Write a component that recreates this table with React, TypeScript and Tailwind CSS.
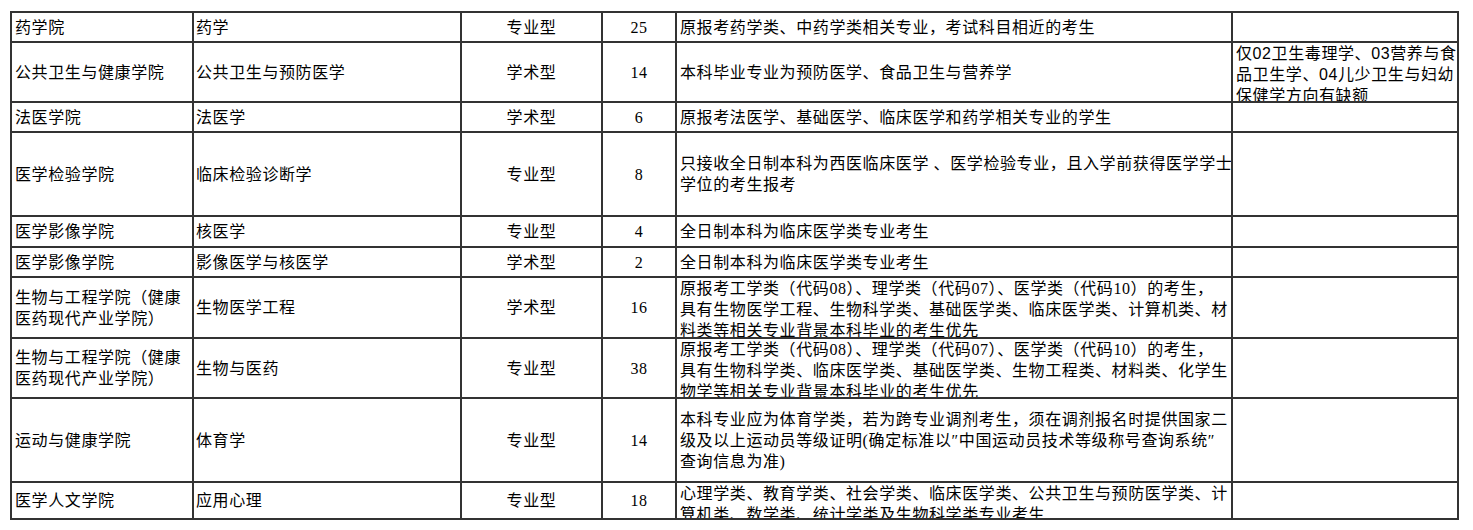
import React from "react";

type Row = {
  college: string[];
  major: string;
  kind: string;
  count: string;
  note: string[];
  noteTop?: boolean;
  remark?: string[];
};

const rows: Row[] = [
  { college: ["药学院"], major: "药学", kind: "专业型", count: "25", note: ["原报考药学类、中药学类相关专业，考试科目相近的考生"] },
  {
    college: ["公共卫生与健康学院"],
    major: "公共卫生与预防医学",
    kind: "学术型",
    count: "14",
    note: ["本科毕业专业为预防医学、食品卫生与营养学"],
    remark: ["仅02卫生毒理学、03营养与食", "品卫生学、04儿少卫生与妇幼", "保健学方向有缺额"],
  },
  { college: ["法医学院"], major: "法医学", kind: "学术型", count: "6", note: ["原报考法医学、基础医学、临床医学和药学相关专业的学生"] },
  {
    college: ["医学检验学院"],
    major: "临床检验诊断学",
    kind: "专业型",
    count: "8",
    note: ["只接收全日制本科为西医临床医学 、医学检验专业，且入学前获得医学学士", "学位的考生报考"],
  },
  { college: ["医学影像学院"], major: "核医学", kind: "专业型", count: "4", note: ["全日制本科为临床医学类专业考生"] },
  { college: ["医学影像学院"], major: "影像医学与核医学", kind: "学术型", count: "2", note: ["全日制本科为临床医学类专业考生"] },
  {
    college: ["生物与工程学院（健康", "医药现代产业学院）"],
    major: "生物医学工程",
    kind: "学术型",
    count: "16",
    noteTop: true,
    note: [
      "原报考工学类（代码08）、理学类（代码07）、医学类（代码10）的考生，",
      "具有生物医学工程、生物科学类、基础医学类、临床医学类、计算机类、材",
      "料类等相关专业背景本科毕业的考生优先",
    ],
  },
  {
    college: ["生物与工程学院（健康", "医药现代产业学院）"],
    major: "生物与医药",
    kind: "专业型",
    count: "38",
    noteTop: true,
    note: [
      "原报考工学类（代码08）、理学类（代码07）、医学类（代码10）的考生，",
      "具有生物科学类、临床医学类、基础医学类、生物工程类、材料类、化学生",
      "物学等相关专业背景本科毕业的考生优先",
    ],
  },
  {
    college: ["运动与健康学院"],
    major: "体育学",
    kind: "专业型",
    count: "14",
    note: [
      "本科专业应为体育学类，若为跨专业调剂考生，须在调剂报名时提供国家二",
      "级及以上运动员等级证明(确定标准以″中国运动员技术等级称号查询系统″",
      "查询信息为准)",
    ],
  },
  {
    college: ["医学人文学院"],
    major: "应用心理",
    kind: "专业型",
    count: "18",
    noteTop: true,
    note: [
      "心理学类、教育学类、社会学类、临床医学类、公共卫生与预防医学类、计",
      "算机类、数学类、统计学类及生物科学类专业考生",
    ],
  },
];

function Lines({ lines }: { lines: string[] }) {
  return (
    <>
      {lines.map((l, i) => (
        <div key={i} className="whitespace-nowrap">
          {l}
        </div>
      ))}
    </>
  );
}

export default function App() {
  return (
    <div className="min-h-screen bg-white pt-[11px] pl-[10px] text-black text-[16px] leading-[21px] tracking-[0.6px] font-[family-name:'Liberation_Serif','Noto_Sans_CJK_SC',serif]">
      <div className="grid w-fit grid-cols-[180px_266px_139px_72px_554px_224px] grid-rows-[28px_58px_28px_82px_29px_28px_59px_58px_82px_35px] gap-[2px] bg-[#333] p-[2px]">
        {rows.map((r, i) => (
          <React.Fragment key={i}>
            <div className="flex flex-col justify-center overflow-hidden bg-white pl-[3px]">
              <Lines lines={r.college} />
            </div>
            <div className="flex flex-col justify-center overflow-hidden bg-white pl-[2px]">
              <div className="whitespace-nowrap">{r.major}</div>
            </div>
            <div className="flex items-center justify-center overflow-hidden bg-white">
              <span className="whitespace-nowrap">{r.kind}</span>
            </div>
            <div className="flex items-center justify-center overflow-hidden bg-white">
              <span>{r.count}</span>
            </div>
            <div
              className={
                r.noteTop
                  ? "flex flex-col justify-start overflow-hidden bg-white pl-[3px]"
                  : "flex flex-col justify-center overflow-hidden bg-white pl-[3px]"
              }
            >
              <Lines lines={r.note} />
            </div>
            <div className="flex flex-col justify-start overflow-hidden bg-white pl-[3px] font-[family-name:'Liberation_Sans','Noto_Sans_CJK_SC',sans-serif]">
              {r.remark ? <Lines lines={r.remark} /> : null}
            </div>
          </React.Fragment>
        ))}
      </div>
    </div>
  );
}
